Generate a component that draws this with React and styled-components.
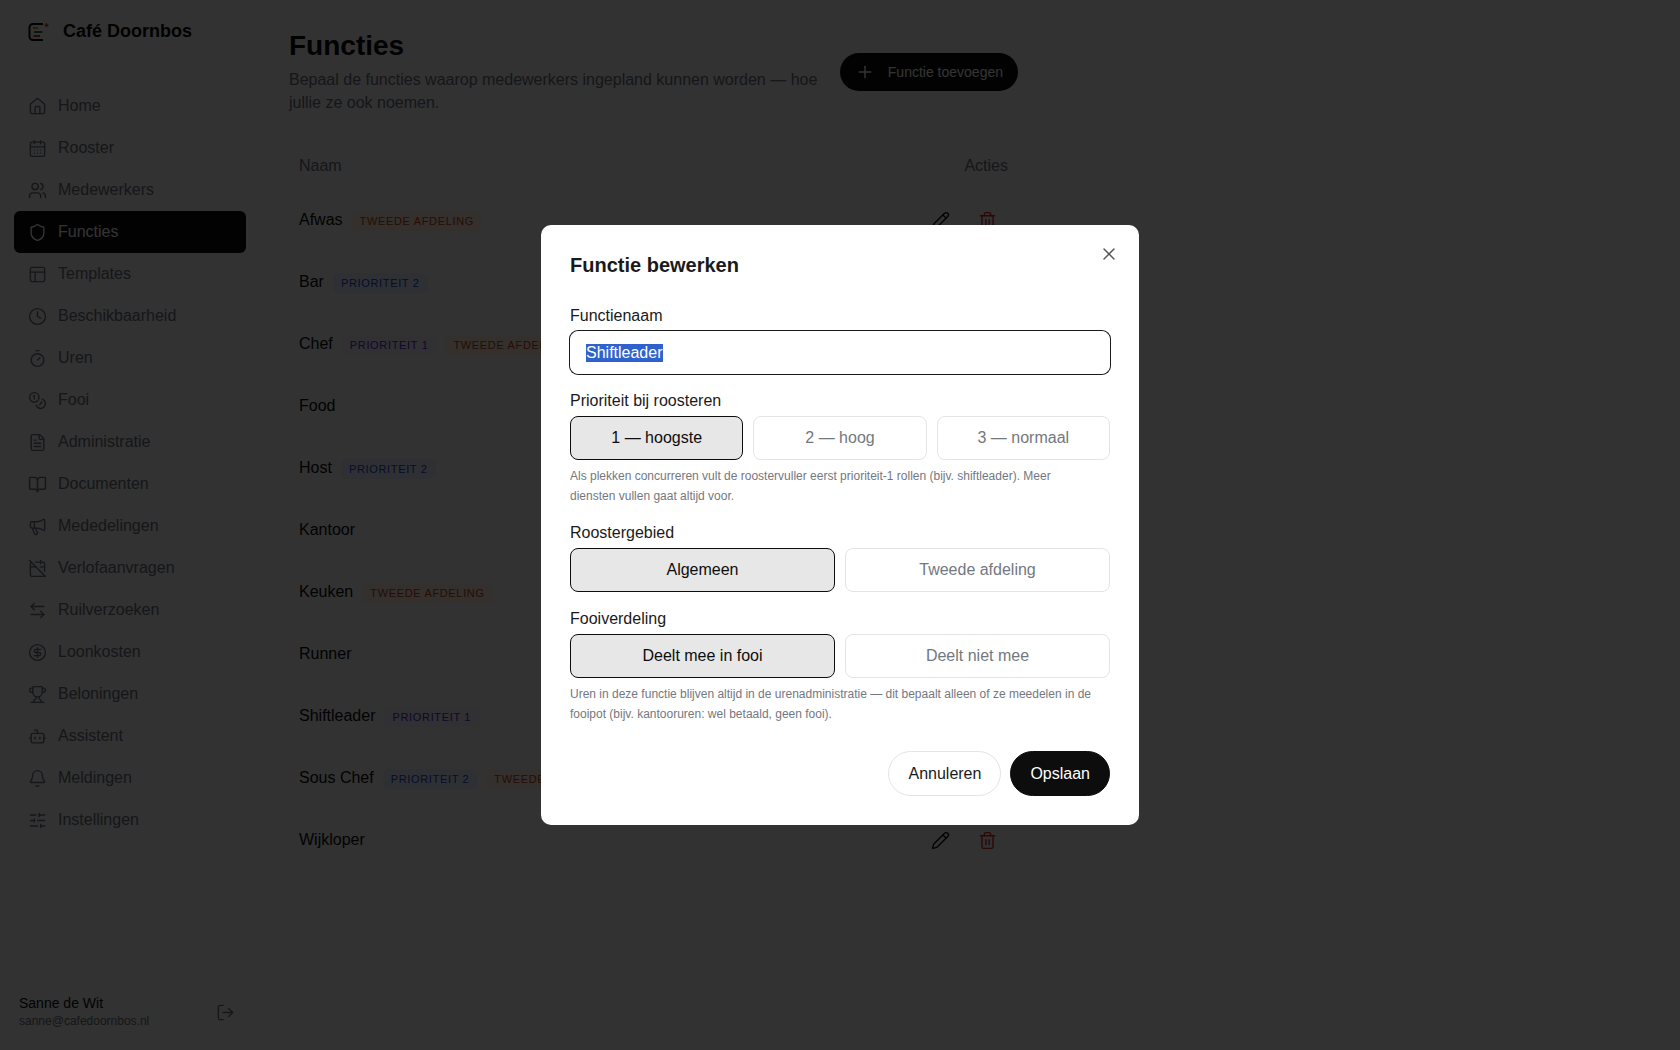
import React, { useEffect, useRef, useState } from "react";
import styled, { createGlobalStyle } from "styled-components";
import {
  House, CalendarDays, Users, Shield, PanelsTopLeft, Clock, Timer, Coins, FileText,
  BookOpen, Megaphone, CalendarOff, ArrowLeftRight, CircleDollarSign, Trophy, Bot, Bell,
  SlidersHorizontal, LogOut, Plus, Pencil, Trash2, X,
} from "lucide-react";

const Global = createGlobalStyle`
  *, *::before, *::after { box-sizing: border-box; }
  body {
    margin: 0;
    background: #f7f7f7;
    color: #0d0d0d;
    font: 16px/22px "Liberation Sans", Arial, sans-serif;
  }
  button, input { font: inherit; color: inherit; }
`;

const Shell = styled.div`
  display: flex;
  min-height: 100vh;
`;

const Sidebar = styled.aside`
  position: sticky;
  top: 0;
  display: flex;
  flex-direction: column;
  flex: none;
  width: 260px;
  height: 100vh;
  padding: 14px 14px 20px;
`;

const Brand = styled.div`
  display: flex;
  align-items: center;
  gap: 13px;
  height: 34px;
  margin-bottom: 37px;
  padding-left: 14px;
  font-size: 18px;
  font-weight: 700;
`;

const Nav = styled.nav`
  display: flex;
  flex-direction: column;
  flex: 1;
`;

const NavLink = styled.a`
  display: flex;
  align-items: center;
  gap: 11px;
  height: 42px;
  padding: 0 14px;
  border-radius: 6px;
  text-decoration: none;
  color: ${(p) => (p.$active ? "#ffffff" : "#6b7280")};
  background: ${(p) => (p.$active ? "#0d0d0d" : "transparent")};
`;

const Account = styled.div`
  display: flex;
  align-items: center;
  justify-content: space-between;
  padding: 0 8px 0 5px;
`;

const AccountName = styled.div`
  font-size: 14px;
  line-height: 18px;
`;

const AccountMail = styled.div`
  font-size: 12px;
  line-height: 18px;
  color: #6b7280;
`;

const IconButton = styled.button`
  display: inline-flex;
  align-items: center;
  justify-content: center;
  width: ${(p) => p.$size || 42}px;
  height: ${(p) => p.$size || 42}px;
  padding: 0;
  border: 0;
  background: none;
  color: ${(p) => p.$color || "#0d0d0d"};
`;

const Main = styled.main`
  flex: 1;
  padding: 29px;
`;

const Content = styled.div`
  max-width: 729px;
`;

const PageHeader = styled.header`
  display: flex;
  align-items: center;
  gap: 16px;
  margin-bottom: 29px;
`;

const Heading = styled.div`
  flex: 1;
`;

const Title = styled.h1`
  margin: 0 0 5px;
  font-size: 28px;
  line-height: 34px;
`;

const Intro = styled.p`
  margin: 0;
  line-height: 23px;
  color: #6b7280;
`;

const AddButton = styled.button`
  display: flex;
  align-items: center;
  gap: 13px;
  height: 38px;
  padding: 0 15px;
  border: 0;
  border-radius: 19px;
  background: #0d0d0d;
  color: #ffffff;
  font-size: 14px;
  white-space: nowrap;
`;

const Table = styled.table`
  width: 100%;
  border-collapse: collapse;
`;

const HeadCell = styled.th`
  height: 46px;
  padding: 0 10px;
  font-weight: 400;
  text-align: ${(p) => p.$align || "left"};
  color: #6b7280;
`;

const Cell = styled.td`
  height: 62px;
  padding: 0 10px;
`;

const NameLine = styled.div`
  display: flex;
  align-items: baseline;
  gap: 9px;
`;

const Actions = styled.div`
  display: flex;
  justify-content: flex-end;
  gap: 5px;
`;

const tones = {
  violet: { text: "#5f22d9", fill: "#f3f0fd" },
  blue: { text: "#2540e0", fill: "#e6f0fc" },
  orange: { text: "#cc420c", fill: "#fcf0e2" },
};

const Badge = styled.span`
  padding: 0 8px;
  border-radius: 5px;
  font-size: 11px;
  line-height: 20px;
  letter-spacing: 0.06em;
  text-transform: uppercase;
  color: ${(p) => tones[p.$tone].text};
  background: ${(p) => tones[p.$tone].fill};
`;

const Overlay = styled.div`
  position: fixed;
  inset: 0;
  display: flex;
  align-items: center;
  justify-content: center;
  padding: 20px;
  background: rgba(0, 0, 0, 0.8);
`;

const Dialog = styled.form`
  position: relative;
  width: 100%;
  max-width: 598px;
  padding: 29px;
  border-radius: 10px;
  background: #ffffff;
`;

const DialogTitle = styled.h2`
  margin: 0 0 29px;
  font-size: 20px;
  line-height: 22px;
  color: #1a1a1a;
`;

const Close = styled(IconButton)`
  position: absolute;
  top: 19px;
  right: 20px;
`;

const Fields = styled.div`
  display: flex;
  flex-direction: column;
  gap: 16px;
`;

const Field = styled.div`
  display: flex;
  flex-direction: column;
  gap: 4px;
`;

const Label = styled.label`
  color: #1a1a1a;
`;

const TextInput = styled.input`
  width: 100%;
  height: 43px;
  padding: 0 15px;
  border: 1px solid #ffffff;
  border-radius: 8px;
  outline: none;
  background: #ffffff;
  &:focus { box-shadow: 0 0 0 1px #1a1a1a; }
  &::selection { background: #2f62cc; color: #ffffff; }
`;

const Choices = styled.div`
  display: grid;
  grid-template-columns: repeat(${(p) => p.$count}, 1fr);
  gap: 10px;
`;

const Choice = styled.label`
  display: flex;
  align-items: center;
  justify-content: center;
  height: 44px;
  border: 1px solid #e4e4e4;
  border-radius: 8px;
  color: #737880;
  &:has(input:checked) {
    border-color: #0d0d0d;
    background: #e7e7e7;
    color: #0d0d0d;
  }
`;

const HiddenRadio = styled.input`
  appearance: none;
  width: 0;
  height: 0;
  margin: 0;
`;

const Hint = styled.p`
  margin: 2px 0 0;
  padding-right: 15px;
  font-size: 12px;
  line-height: 20px;
  color: #737880;
`;

const Footer = styled.footer`
  display: flex;
  justify-content: flex-end;
  gap: 9px;
  margin-top: 27px;
`;

const PillButton = styled.button`
  height: 45px;
  padding: 0 19px;
  border: 1px solid ${(p) => (p.$primary ? "#0d0d0d" : "#e4e4e4")};
  border-radius: 23px;
  background: ${(p) => (p.$primary ? "#0d0d0d" : "#ffffff")};
  color: ${(p) => (p.$primary ? "#ffffff" : "#1a1a1a")};
`;

const nav = [
  ["Home", House], ["Rooster", CalendarDays], ["Medewerkers", Users], ["Functies", Shield],
  ["Templates", PanelsTopLeft], ["Beschikbaarheid", Clock], ["Uren", Timer], ["Fooi", Coins],
  ["Administratie", FileText], ["Documenten", BookOpen], ["Mededelingen", Megaphone],
  ["Verlofaanvragen", CalendarOff], ["Ruilverzoeken", ArrowLeftRight],
  ["Loonkosten", CircleDollarSign], ["Beloningen", Trophy], ["Assistent", Bot],
  ["Meldingen", Bell], ["Instellingen", SlidersHorizontal],
];

const P1 = ["Prioriteit 1", "violet"];
const P2 = ["Prioriteit 2", "blue"];
const T2 = ["Tweede afdeling", "orange"];

const roles = [
  ["Afwas", [T2]], ["Bar", [P2]], ["Chef", [P1, T2]], ["Food", []], ["Host", [P2]],
  ["Kantoor", []], ["Keuken", [T2]], ["Runner", []], ["Shiftleader", [P1]],
  ["Sous Chef", [P2, T2]], ["Wijkloper", []],
];

function Logo() {
  return (
    <svg width="22" height="20" viewBox="0 0 22 20" fill="none" aria-hidden="true">
      <path d="M15 3H5a3.500 3.500 0 0 0-3.500 3.500v9A3.500 3.500 0 0 0 5 19h10" stroke="#0d0d0d" strokeWidth="2" />
      <path d="M5 7h5" stroke="#ca9a04" strokeWidth="2" />
      <path d="M6 11h8.500" stroke="#16803c" strokeWidth="2" />
      <path d="M5.500 15h6.500" stroke="#dc2626" strokeWidth="2" />
      <path d="M18.500 1.500l.8 2 2 .8-2 .8-.8 2-.8-2-2-.8 2-.8z" fill="#dc2626" />
    </svg>
  );
}

function ChoiceField({ name, label, options, hint }) {
  const [value, setValue] = useState(options[0]);
  return (
    <Field role="radiogroup" aria-labelledby={`${name}-label`}>
      <Label as="span" id={`${name}-label`}>{label}</Label>
      <Choices $count={options.length}>
        {options.map((option) => (
          <Choice key={option}>
            <HiddenRadio type="radio" name={name} checked={value === option} onChange={() => setValue(option)} />
            {option}
          </Choice>
        ))}
      </Choices>
      {hint && <Hint>{hint}</Hint>}
    </Field>
  );
}

function EditDialog() {
  const input = useRef(null);
  useEffect(() => {
    input.current.focus();
    input.current.select();
  }, []);
  return (
    <Overlay>
      <Dialog role="dialog" aria-modal="true" aria-labelledby="dialog-title" onSubmit={(e) => e.preventDefault()}>
        <DialogTitle id="dialog-title">Functie bewerken</DialogTitle>
        <Close type="button" aria-label="Sluiten" $size={20} $color="#555555">
          <X size={20} strokeWidth={1.75} />
        </Close>
        <Fields>
          <Field>
            <Label htmlFor="role-name">Functienaam</Label>
            <TextInput id="role-name" ref={input} defaultValue="Shiftleader" />
          </Field>
          <ChoiceField
            name="priority"
            label="Prioriteit bij roosteren"
            options={["1 — hoogste", "2 — hoog", "3 — normaal"]}
            hint="Als plekken concurreren vult de roostervuller eerst prioriteit-1 rollen (bijv. shiftleader). Meer diensten vullen gaat altijd voor."
          />
          <ChoiceField name="area" label="Roostergebied" options={["Algemeen", "Tweede afdeling"]} />
          <ChoiceField
            name="tips"
            label="Fooiverdeling"
            options={["Deelt mee in fooi", "Deelt niet mee"]}
            hint="Uren in deze functie blijven altijd in de urenadministratie — dit bepaalt alleen of ze meedelen in de fooipot (bijv. kantooruren: wel betaald, geen fooi)."
          />
        </Fields>
        <Footer>
          <PillButton type="button">Annuleren</PillButton>
          <PillButton type="submit" $primary>Opslaan</PillButton>
        </Footer>
      </Dialog>
    </Overlay>
  );
}

export default function App() {
  return (
    <>
      <Global />
      <Shell>
        <Sidebar>
          <Brand><Logo />Café Doornbos</Brand>
          <Nav>
            {nav.map(([label, Icon]) => (
              <NavLink key={label} href="#" $active={label === "Functies"}>
                <Icon size={19} strokeWidth={1.75} />
                {label}
              </NavLink>
            ))}
          </Nav>
          <Account>
            <div>
              <AccountName>Sanne de Wit</AccountName>
              <AccountMail>sanne@cafedoornbos.nl</AccountMail>
            </div>
            <IconButton aria-label="Uitloggen" $size={26} $color="#6b7280">
              <LogOut size={19} strokeWidth={1.75} />
            </IconButton>
          </Account>
        </Sidebar>
        <Main>
          <Content>
            <PageHeader>
              <Heading>
                <Title>Functies</Title>
                <Intro>Bepaal de functies waarop medewerkers ingepland kunnen worden — hoe jullie ze ook noemen.</Intro>
              </Heading>
              <AddButton><Plus size={20} strokeWidth={1.75} />Functie toevoegen</AddButton>
            </PageHeader>
            <Table>
              <thead>
                <tr>
                  <HeadCell>Naam</HeadCell>
                  <HeadCell $align="right">Acties</HeadCell>
                </tr>
              </thead>
              <tbody>
                {roles.map(([name, badges]) => (
                  <tr key={name}>
                    <Cell>
                      <NameLine>
                        {name}
                        {badges.map(([text, tone]) => <Badge key={text} $tone={tone}>{text}</Badge>)}
                      </NameLine>
                    </Cell>
                    <Cell>
                      <Actions>
                        <IconButton aria-label={`${name} bewerken`}><Pencil size={19} strokeWidth={1.75} /></IconButton>
                        <IconButton aria-label={`${name} verwijderen`} $color="#dc2626"><Trash2 size={19} strokeWidth={1.75} /></IconButton>
                      </Actions>
                    </Cell>
                  </tr>
                ))}
              </tbody>
            </Table>
          </Content>
        </Main>
      </Shell>
      <EditDialog />
    </>
  );
}
